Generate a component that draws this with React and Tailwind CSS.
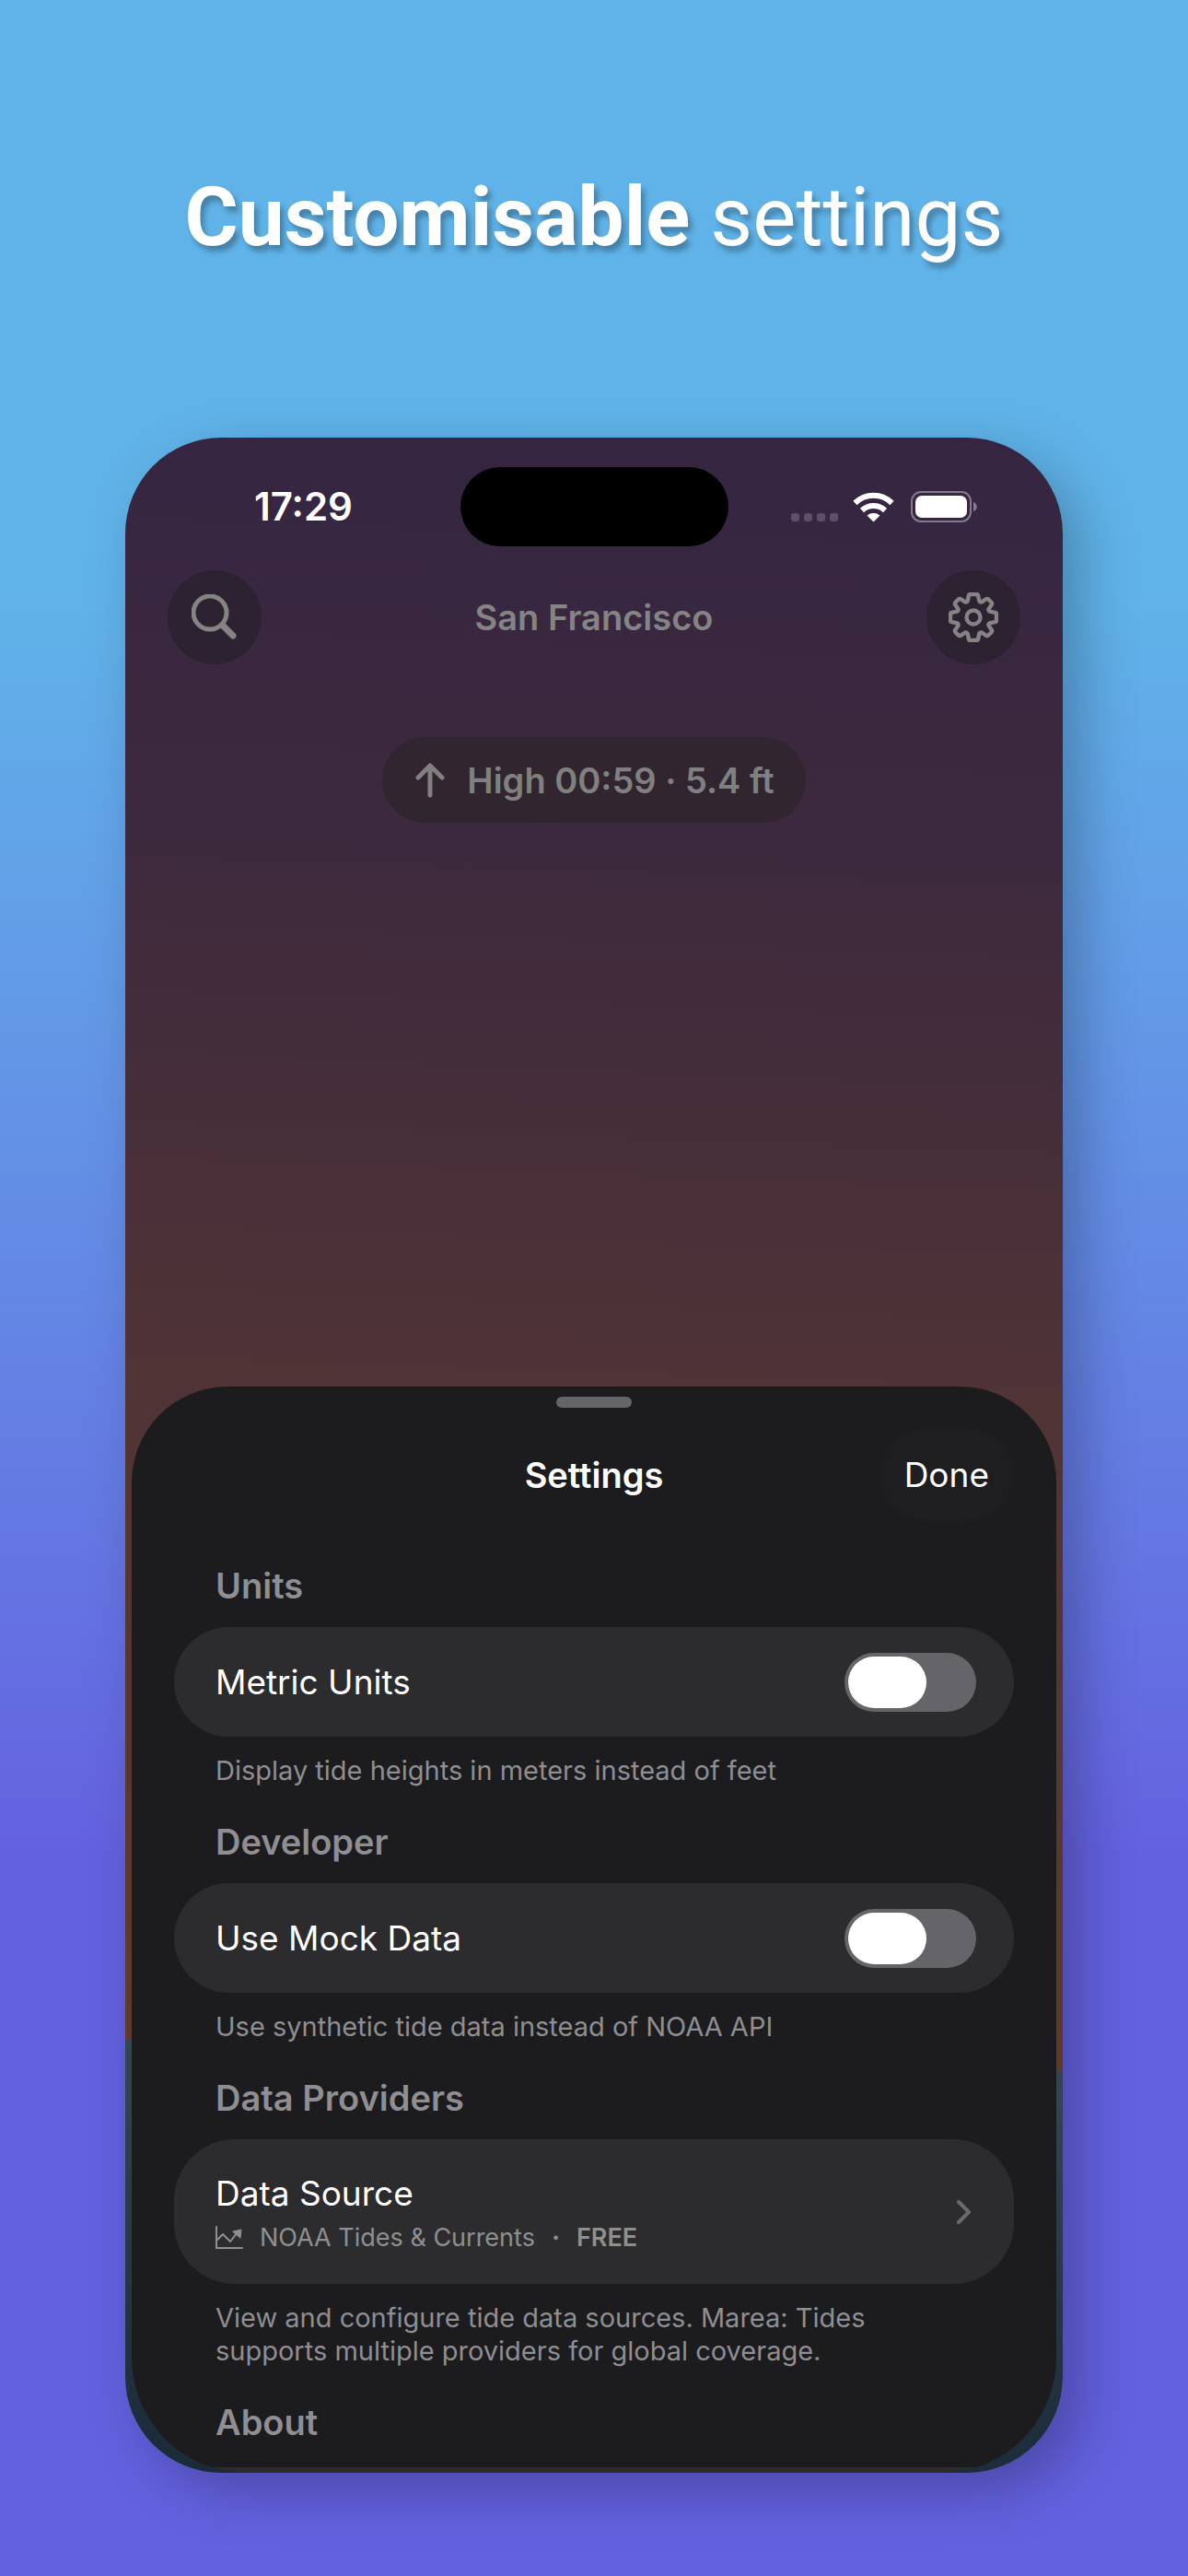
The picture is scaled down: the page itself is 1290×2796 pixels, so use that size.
import React, { useState } from "react";

const SECTION_TITLE = "px-[45px] text-[38px] leading-[48px] font-semibold text-[#8e8e93]";
const SECTION_NOTE = "px-[45px] pt-[19px] text-[29px] leading-[36px] text-[#8e8e93]";

const SearchIcon = () => (
  <svg width="50" height="50" viewBox="0 0 50 50" fill="none" stroke="#848484" strokeLinecap="round" aria-hidden="true">
    <circle cx="20" cy="20" r="18" strokeWidth="5" />
    <path d="M34 34 L45 45" strokeWidth="7" />
  </svg>
);

// one tooth per 45 degrees
const GearIcon = () => (
  <svg width="54" height="54" viewBox="-27 -27 54 54" fill="none" stroke="#848484" strokeWidth="4.4" strokeLinejoin="round" aria-hidden="true">
    <path d="M-3.5 -25 L3.5 -25 Q4.8 -25 5.1 -23.5 L6.3 -17.8 Q7.2 -15.9 9 -16.6 L13.7 -19.8 Q15.2 -20.5 16.2 -19.5 L19.5 -16.2 Q20.5 -15.2 19.8 -13.7 L16.6 -9 Q15.9 -7.2 17.8 -6.3 L23.5 -5.1 Q25 -4.8 25 -3.5 L25 3.5 Q25 4.8 23.5 5.1 L17.8 6.3 Q15.9 7.2 16.6 9 L19.8 13.7 Q20.5 15.2 19.5 16.2 L16.2 19.5 Q15.2 20.5 13.7 19.8 L9 16.6 Q7.2 15.9 6.3 17.8 L5.1 23.5 Q4.8 25 3.5 25 L-3.5 25 Q-4.8 25 -5.1 23.5 L-6.3 17.8 Q-7.2 15.9 -9 16.6 L-13.7 19.8 Q-15.2 20.5 -16.2 19.5 L-19.5 16.2 Q-20.5 15.2 -19.8 13.7 L-16.6 9 Q-15.9 7.2 -17.8 6.3 L-23.5 5.1 Q-25 4.8 -25 3.5 L-25 -3.5 Q-25 -4.8 -23.5 -5.1 L-17.8 -6.3 Q-15.9 -7.2 -16.6 -9 L-19.8 -13.7 Q-20.5 -15.2 -19.5 -16.2 L-16.2 -19.5 Q-15.2 -20.5 -13.7 -19.8 L-9 -16.6 Q-7.2 -15.9 -6.3 -17.8 L-5.1 -23.5 Q-4.8 -25 -3.5 -25 Z" />
    <circle r="7.5" />
  </svg>
);

const WifiIcon = () => (
  <svg width="45" height="33" viewBox="0 0 45 33" fill="none" stroke="#fff" strokeWidth="6" aria-hidden="true">
    <path d="M2.5 12 A28.5 28.5 0 0 1 42.5 12" />
    <path d="M10 20 A18 18 0 0 1 35 20" />
    <path d="M22.5 32.5 L15.5 25.5 A10 10 0 0 1 29.5 25.5 Z" fill="#fff" stroke="none" />
  </svg>
);

const BatteryIcon = () => (
  <svg width="72" height="34" viewBox="0 0 72 34" aria-hidden="true">
    <rect x="1" y="1" width="64" height="32" rx="10" fill="none" stroke="#857a8c" strokeWidth="2" />
    <rect x="5" y="5" width="56" height="24" rx="7" fill="#fff" />
    <path d="M68 12 C73 13 73 21 68 22 Z" fill="#857a8c" />
  </svg>
);

const TrendIcon = () => (
  <svg width="30" height="26" viewBox="0 0 30 26" fill="none" stroke="#8f8f8f" strokeWidth="2" strokeLinecap="round" strokeLinejoin="round" aria-hidden="true">
    <path d="M1 1 V24 H29" />
    <path d="M2 15 L8 9 L16 17 L23 8" />
    <path d="M19 6 L28 4 L27 13 Z" fill="#8f8f8f" strokeWidth="1" />
  </svg>
);

const ToggleRow = ({ id, label, checked, onChange }) => (
  <div className="mt-[21px] flex h-[119px] items-center justify-between rounded-full bg-[#2c2c2e] pr-[41px] pl-[45px]">
    <label htmlFor={id} className="text-[37px] leading-[48px] text-white">{label}</label>
    <span className="relative h-[64px] w-[143px]">
      <input
        id={id}
        type="checkbox"
        role="switch"
        checked={checked}
        onChange={onChange}
        className="peer h-full w-full cursor-pointer appearance-none rounded-full bg-[#656469] checked:bg-[#30d158]"
      />
      <span className="pointer-events-none absolute top-1 left-1 h-14 w-[85px] rounded-full bg-white peer-checked:right-1 peer-checked:left-auto" />
    </span>
  </div>
);

const StatusBar = () => (
  <div className="grid grid-cols-[1fr_291px_1fr] items-center pt-8">
    <span className="pl-[140px] text-[42px] leading-[48px] font-semibold text-white">17:29</span>
    <span className="h-[86px] rounded-full bg-black" />
    <div className="flex items-center justify-end pr-[93px]">
      <span className="mt-[22px] mr-4 flex gap-[5px]">
        {[0, 1, 2, 3].map((n) => (
          <span key={n} className="size-[9px] rounded-[3px] bg-[#5f4f68]" />
        ))}
      </span>
      <WifiIcon />
      <span className="w-[18px]" />
      <BatteryIcon />
    </div>
  </div>
);

const SettingsSheet = () => {
  const [metric, setMetric] = useState(false);
  const [mock, setMock] = useState(false);

  return (
    <section className="mx-[7px] mt-[612px] flex-1 overflow-hidden rounded-t-[104px] rounded-b-[125px] bg-[#1c1c1e]">
      <div className="mx-auto mt-[11px] h-3 w-[82px] rounded-full bg-[#656469]" />
      <div className="px-[46px]">
        <header className="mt-[22px] grid grid-cols-[1fr_auto_1fr] items-center">
          <span />
          <h2 className="text-[38px] leading-[48px] font-semibold text-white">Settings</h2>
          <button type="button" className="h-[101px] justify-self-end rounded-full bg-[#1e1e20] px-[27px] text-[37px] leading-[48px] text-white">Done</button>
        </header>

        <h3 className={`mt-[46px] ${SECTION_TITLE}`}>Units</h3>
        <ToggleRow id="metric" label="Metric Units" checked={metric} onChange={(e) => setMetric(e.target.checked)} />
        <p className={SECTION_NOTE}>Display tide heights in meters instead of feet</p>

        <h3 className={`mt-[35px] ${SECTION_TITLE}`}>Developer</h3>
        <ToggleRow id="mock" label="Use Mock Data" checked={mock} onChange={(e) => setMock(e.target.checked)} />
        <p className={SECTION_NOTE}>Use synthetic tide data instead of NOAA API</p>

        <h3 className={`mt-[35px] ${SECTION_TITLE}`}>Data Providers</h3>
        <button type="button" className="mt-[21px] flex h-[157px] w-full items-center justify-between rounded-[66px] bg-[#2c2c2e] pr-[46px] pl-[45px] text-left">
          <span className="flex flex-col pt-2">
            <span className="text-[37px] leading-[48px] text-white">Data Source</span>
            <span className="flex items-center text-[27px] leading-[48px] text-[#8f8f8f]">
              <TrendIcon />
              <span className="ml-[18px]">NOAA Tides &amp; Currents</span>
              <span className="mx-[18px] font-bold">·</span>
              <span className="font-semibold">FREE</span>
            </span>
          </span>
          <svg width="16" height="26" viewBox="0 0 16 26" fill="none" stroke="#6a6a6c" strokeWidth="4" strokeLinecap="round" strokeLinejoin="round" aria-hidden="true">
            <path d="M2 2 L13 13 L2 24" />
          </svg>
        </button>
        <p className={SECTION_NOTE}>
          View and configure tide data sources. Marea: Tides<br />
          supports multiple providers for global coverage.
        </p>

        <h3 className={`mt-[35px] ${SECTION_TITLE}`}>About</h3>
      </div>
      <div className="mt-[25px] h-1.5 bg-[#2c2c2e]" />
    </section>
  );
};

const App = () => (
  <main className="min-h-screen bg-linear-to-b from-[#60b3e9] from-23% to-[#6461e0] to-72% px-[136px] pt-[182px] pb-[113px] font-['Inter','Liberation_Sans',sans-serif]">
    <h1 className="text-center font-['Roboto','Liberation_Sans',sans-serif] text-[89px] leading-[108px] font-normal text-white text-shadow-[4px_6px_6px_rgba(0,0,0,0.3)]">
      <strong className="font-bold">Customisable</strong> settings
    </h1>

    <div className="mt-[185px] flex flex-col overflow-hidden rounded-[104px] bg-[linear-gradient(182deg,#352542_0%,#3e2a3d_22%,#4f3336_46%,#5f3a2a_79%,#34464d_79%,#1a2a38_100%)] shadow-[20px_20px_60px_rgba(0,0,0,0.25)]">
      <StatusBar />

      <nav className="mt-[26px] flex items-center justify-between px-[46px]">
        <button type="button" aria-label="Search" className="flex size-[102px] items-center justify-center rounded-full bg-[#2d2231]">
          <SearchIcon />
        </button>
        <span className="text-[38px] leading-[48px] font-semibold text-[#848484]">San Francisco</span>
        <button type="button" aria-label="Settings" className="flex size-[102px] items-center justify-center rounded-full bg-[#2d2231]">
          <GearIcon />
        </button>
      </nav>

      <div className="mx-auto mt-[79px] flex h-[93px] items-center rounded-full bg-[#312530] pr-[34px] pl-[36px] text-[38px] leading-[48px] font-semibold text-[#808080]">
        <svg width="32" height="38" viewBox="0 0 32 38" fill="none" stroke="#808080" strokeWidth="5" strokeLinecap="round" strokeLinejoin="round" aria-hidden="true">
          <path d="M16 35 V3 M3 16 L16 3 L29 16" />
        </svg>
        <span className="ml-6">High 00:59 · 5.4 ft</span>
      </div>

      <SettingsSheet />
    </div>
  </main>
);

export default App;
